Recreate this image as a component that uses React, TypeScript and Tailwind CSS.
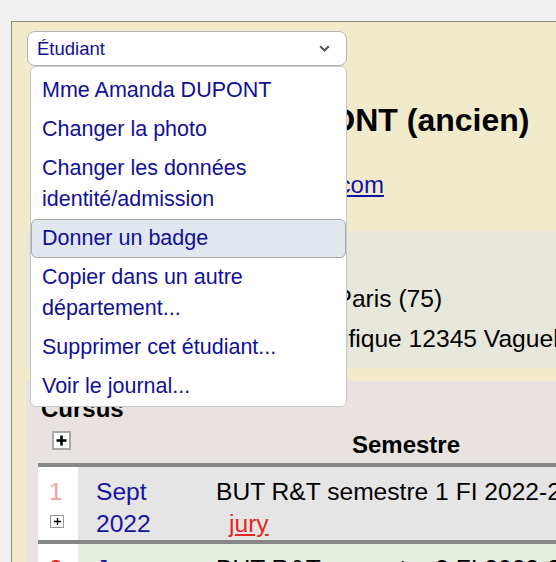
import React from 'react';

const menuItems: { label: React.ReactNode; active?: boolean }[] = [
  { label: 'Mme Amanda DUPONT' },
  { label: 'Changer la photo' },
  { label: <>Changer les données<br />identité/admission</> },
  { label: 'Donner un badge', active: true },
  { label: <>Copier dans un autre<br />département...</> },
  { label: 'Supprimer cet étudiant...' },
  { label: 'Voir le journal...' },
];

function PlusBox({ big = false }: { big?: boolean }) {
  return big ? (
    <div className="w-[19px] h-[19px] bg-white border-2 border-[#a8a8a8] flex items-center justify-center">
      <svg width="13" height="13" viewBox="0 0 13 13">
        <path d="M6.5 1.5v10M1.5 6.5h10" stroke="#000" strokeWidth="2.6" />
      </svg>
    </div>
  ) : (
    <div className="w-[14px] h-[13px] bg-white border border-[#9a9a9a] flex items-center justify-center">
      <svg width="9" height="9" viewBox="0 0 9 9">
        <path d="M4.5 1v7M1 4.5h7" stroke="#000" strokeWidth="1.4" />
      </svg>
    </div>
  );
}

export default function App() {
  return (
    <div className="relative w-[556px] h-[562px] overflow-hidden bg-[#f0f0f0] pt-[21px] pl-[11px] font-['Liberation_Sans',Arial,sans-serif] text-black">
      <div className="w-[700px] min-h-[600px] border border-[#8a8a8a] bg-[#f2ebcb] pl-[14px]">
        {/* header */}
        <div className="pt-[9px] pb-[33px]">
          <div className="ml-[1px] w-[320px] h-[35px] bg-white border border-[#b5b5b5] rounded-[8px] flex items-center justify-between pl-[9px] pr-[16px]">
            <span className="text-[18.5px] text-[#10109a]">Étudiant</span>
            <svg width="11" height="7" viewBox="0 0 11 7">
              <path d="M1.2 1.2l4.3 4.3 4.3-4.3" fill="none" stroke="#555" strokeWidth="2" />
            </svg>
          </div>
          <h2 className="mt-[36px] pl-[21px] text-[32px] font-bold leading-[36.8px] whitespace-nowrap">
            Mme Amanda DUPONT (ancien)
          </h2>
          <div className="mt-[32px] pl-[24px] text-[24px] leading-[27.6px]">
            <a className="text-[#1111aa] underline">amanda.dupont@example.com</a>
          </div>
        </div>

        {/* identity */}
        <div className="bg-[#e7e7db] pt-[48px] pb-[9px] text-[24.6px] leading-[40px] whitespace-nowrap">
          <div className="pl-[6px]">Née le 2 septembre 2004 à Paris (75)</div>
          <div className="pl-[8px]">Adresse : 13 avenue du Pacifique 12345 Vaguelette</div>
        </div>

        {/* cursus */}
        <div className="mt-[13px] bg-[#e8e3e1] pt-[14px] pb-[40px]">
          <div className="pl-[15px] text-[24px] font-bold leading-[27.6px]">Cursus</div>
          <div className="ml-[12px] text-[24.6px]">
            <div className="flex pt-[8px] pb-[4px]">
              <div className="w-[40px] pl-[14px]">
                <PlusBox big />
              </div>
              <div className="w-[127px]" />
              <div className="w-[402px] text-center text-[24px] font-bold leading-[27.6px]">Semestre</div>
            </div>

            <div className="flex border-t-4 border-[#878787] leading-[32px] whitespace-nowrap">
              <div className="w-[40px] bg-white pl-[11px] pt-[9px]">
                <div className="text-[#f2a3a3]">1</div>
                <div className="h-[32px] flex items-center pl-px pb-[4px]">
                  <PlusBox />
                </div>
              </div>
              <div className="w-[127px] bg-[#e5e5e5] pl-[18px] pt-[9px] text-[#1414a0]">
                <div>Sept</div>
                <div>2022</div>
              </div>
              <div className="w-[500px] bg-[#e5e5e5] pl-[11px] pt-[9px]">
                <div>BUT R&amp;T semestre 1 FI 2022-2023</div>
                <div className="pl-[13px]">
                  <a className="text-[#e2281e] underline">jury</a>
                </div>
              </div>
            </div>

            <div className="flex border-t-4 border-[#878787] leading-[32px] whitespace-nowrap">
              <div className="w-[40px] bg-white pl-[11px] pt-[9px]">
                <div className="text-[#e2281e]">2</div>
              </div>
              <div className="w-[127px] bg-[#e4efe2] pl-[18px] pt-[9px] text-[#1414a0]">
                <div>Janv</div>
                <div>2023</div>
              </div>
              <div className="w-[500px] bg-[#e4efe2] pl-[11px] pt-[9px]">
                <div>BUT R&amp;T semestre 2 FI 2022-2023</div>
              </div>
            </div>
          </div>
        </div>
      </div>

      {/* open select menu */}
      <div className="absolute left-[30px] top-[66px] w-[317px] bg-white border border-[#c8c8c8] rounded-[6px] pt-[4px]">
        {menuItems.map((item, i) => (
          <div
            key={i}
            className={`border rounded-[6px] pl-[10px] pr-[20px] py-[3px] text-[21.5px] leading-[31px] text-[#10109a] whitespace-nowrap ${
              item.active ? 'bg-[#e1e7ef] border-[#a9a9a9]' : 'border-transparent'
            }`}
          >
            {item.label}
          </div>
        ))}
      </div>
    </div>
  );
}
